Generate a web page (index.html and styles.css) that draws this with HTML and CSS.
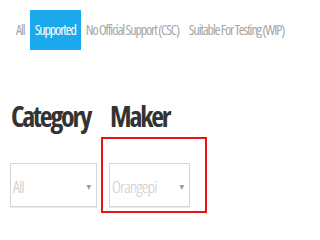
FILE: index.html
```html
<!DOCTYPE html>
<html>
<head>
<meta charset="utf-8">
<link rel="stylesheet" href="styles.css">
</head>
<body>
<div class="page">
  <nav class="tabs">
    <span class="tab">All</span>
    <span class="tab active">Supported</span>
    <span class="tab">No Official Support (CSC)</span>
    <span class="tab">Suitable For Testing (WIP)</span>
  </nav>
  <div class="filters">
    <h2 class="heading">Category</h2>
    <h2 class="heading maker">Maker</h2>
    <div class="cell">
      <div class="select"><span class="value">All</span><span class="arrow">▾</span></div>
    </div>
    <div class="highlight">
      <div class="select narrow"><span class="value">Orangepi</span><span class="arrow">▾</span></div>
    </div>
  </div>
</div>
</body>
</html>
```
FILE: styles.css
```css
html, body {
  margin: 0;
  padding: 0;
  background: #ffffff;
}
.page {
  padding: 10px 0 0 11px;
  font-family: "Open Sans", "DejaVu Sans Condensed", sans-serif;
  font-stretch: 75%;
}
.tabs {
  display: flex;
  height: 40px;
}
.tab {
  padding: 0 5px 0 5px;
  line-height: 40px;
  font-size: 14px;
  letter-spacing: -1.1px;
  color: #a6a6a6;
  white-space: nowrap;
}
.tab.active {
  background: #1aa9ec;
  color: #ffffff;
}
.filters {
  display: grid;
  grid-template-columns: 90px 106px;
  margin-top: 48px;
}
.heading {
  margin: 0;
  font-size: 28px;
  letter-spacing: -2.2px;
  line-height: 36px;
  font-weight: 700;
  color: #333333;
}
.maker {
  padding-left: 9px;
}
.cell {
  padding-top: 29px;
}
.highlight {
  margin-top: 3px;
  border: 2px solid #ee1111;
  padding: 24px 15px 4px 6px;
}
.select {
  box-sizing: border-box;
  width: 87px;
  height: 44px;
  margin-left: -1px;
  border: 1px solid #d6d6d6;
  display: flex;
  align-items: center;
  justify-content: space-between;
  padding: 2px 5px 0 2px;
  box-shadow: 0 1px 1px rgba(0,0,0,0.08);
}
.select.narrow {
  width: 81px;
  margin-left: 0;
}
.value {
  font-size: 17px;
  letter-spacing: -0.75px;
  font-weight: 300;
  color: #c8c8c8;
}
.arrow {
  font-size: 10px;
  color: #999999;
}
```
